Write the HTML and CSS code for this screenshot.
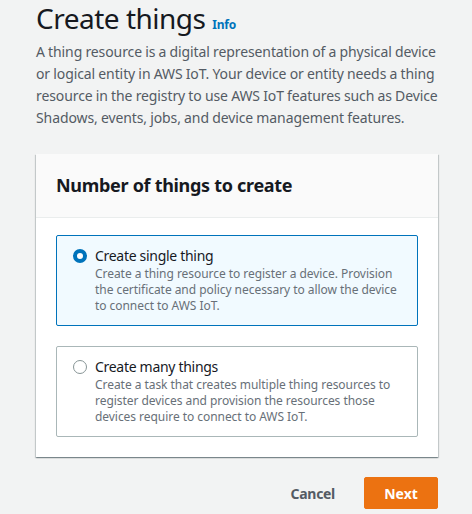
FILE: index.html
```html
<!DOCTYPE html>
<html>
<head>
<meta charset="utf-8">
<link rel="stylesheet" href="styles.css">
</head>
<body>
<div class="page">
  <h1 class="title">Create things <a class="info">Info</a></h1>
  <p class="intro">A thing resource is a digital representation of a physical device or logical entity in AWS IoT. Your device or entity needs a thing resource in the registry to use AWS IoT features such as Device Shadows, events, jobs, and device management features.</p>
  <div class="card">
    <div class="card-head">Number of things to create</div>
    <div class="card-body">
      <div class="option selected">
        <span class="radio on"></span>
        <div class="opt-text">
          <div class="opt-title">Create single thing</div>
          <div class="opt-desc">Create a thing resource to register a device. Provision the certificate and policy necessary to allow the device to connect to AWS IoT.</div>
        </div>
      </div>
      <div class="option">
        <span class="radio"></span>
        <div class="opt-text">
          <div class="opt-title">Create many things</div>
          <div class="opt-desc">Create a task that creates multiple thing resources to register devices and provision the resources those devices require to connect to AWS IoT.</div>
        </div>
      </div>
    </div>
  </div>
  <div class="actions">
    <button class="btn-link">Cancel</button>
    <button class="btn-primary">Next</button>
  </div>
</div>
</body>
</html>
```
FILE: styles.css
```css
html, body { margin: 0; padding: 0; }
body {
  background: #f2f3f3;
  font-family: "Noto Sans", "Open Sans", sans-serif;
  color: #16191f;
}
.page { padding: 0 34px 0 36px; }
.title {
  margin: 0;
  font-size: 28px;
  font-weight: 400;
  line-height: 36px;
  color: #16191f;
  letter-spacing: -0.5px;
}
.info {
  font-size: 12px;
  font-weight: 700;
  line-height: 12px;
  letter-spacing: -0.2px;
  color: #0073bb;
  margin-left: 0;
}
.intro {
  margin: 5px 0 0;
  font-size: 14px;
  line-height: 22px;
  letter-spacing: -0.1px;
  word-spacing: -0.3px;
  color: #545b64;
}
.card {
  margin-top: 25px;
  background: #fff;
  box-shadow: 0 1px 1px rgba(0,28,36,0.3), 1px 1px 1px rgba(0,28,36,0.15), -1px 1px 1px rgba(0,28,36,0.15);
}
.card-head {
  background: #fafafa;
  border-bottom: 1px solid #eaeded;
  padding: 20px 20px 21px;
  font-size: 18px;
  font-weight: 700;
  line-height: 22px;
  letter-spacing: -0.3px;
}
.card-body {
  padding: 17px 20px 20px;
  display: flex;
  flex-direction: column;
  gap: 20px;
}
.option {
  display: flex;
  gap: 8px;
  border: 1px solid #aab7b8;
  border-radius: 2px;
  padding: 10px 16px 11px 16px;
}
.option.selected {
  background: #f1faff;
  border-color: #0073bb;
}
.radio {
  flex: none;
  width: 14px;
  height: 14px;
  margin-top: 3px;
  border-radius: 50%;
  border: 1px solid #879596;
  box-sizing: border-box;
  background: #fff;
}
.radio.on {
  border: 4px solid #0073bb;
}
.opt-title {
  font-size: 14px;
  line-height: 20px;
  letter-spacing: -0.3px;
}
.opt-desc {
  font-size: 12px;
  line-height: 16px;
  letter-spacing: -0.05px;
  color: #687078;
}
.actions {
  display: flex;
  justify-content: flex-end;
  align-items: center;
  gap: 29px;
  margin-top: 20px;
}
.btn-link {
  font-family: inherit;
  background: none;
  border: none;
  font-size: 14px;
  font-weight: 700;
  letter-spacing: -0.3px;
  color: #545b64;
  padding: 4px 0;
}
.btn-primary {
  font-family: inherit;
  background: #ec7211;
  border: 1px solid #ec7211;
  border-radius: 2px;
  color: #fff;
  font-size: 14px;
  font-weight: 700;
  padding: 0;
  width: 74px;
  height: 32px;
}
```
